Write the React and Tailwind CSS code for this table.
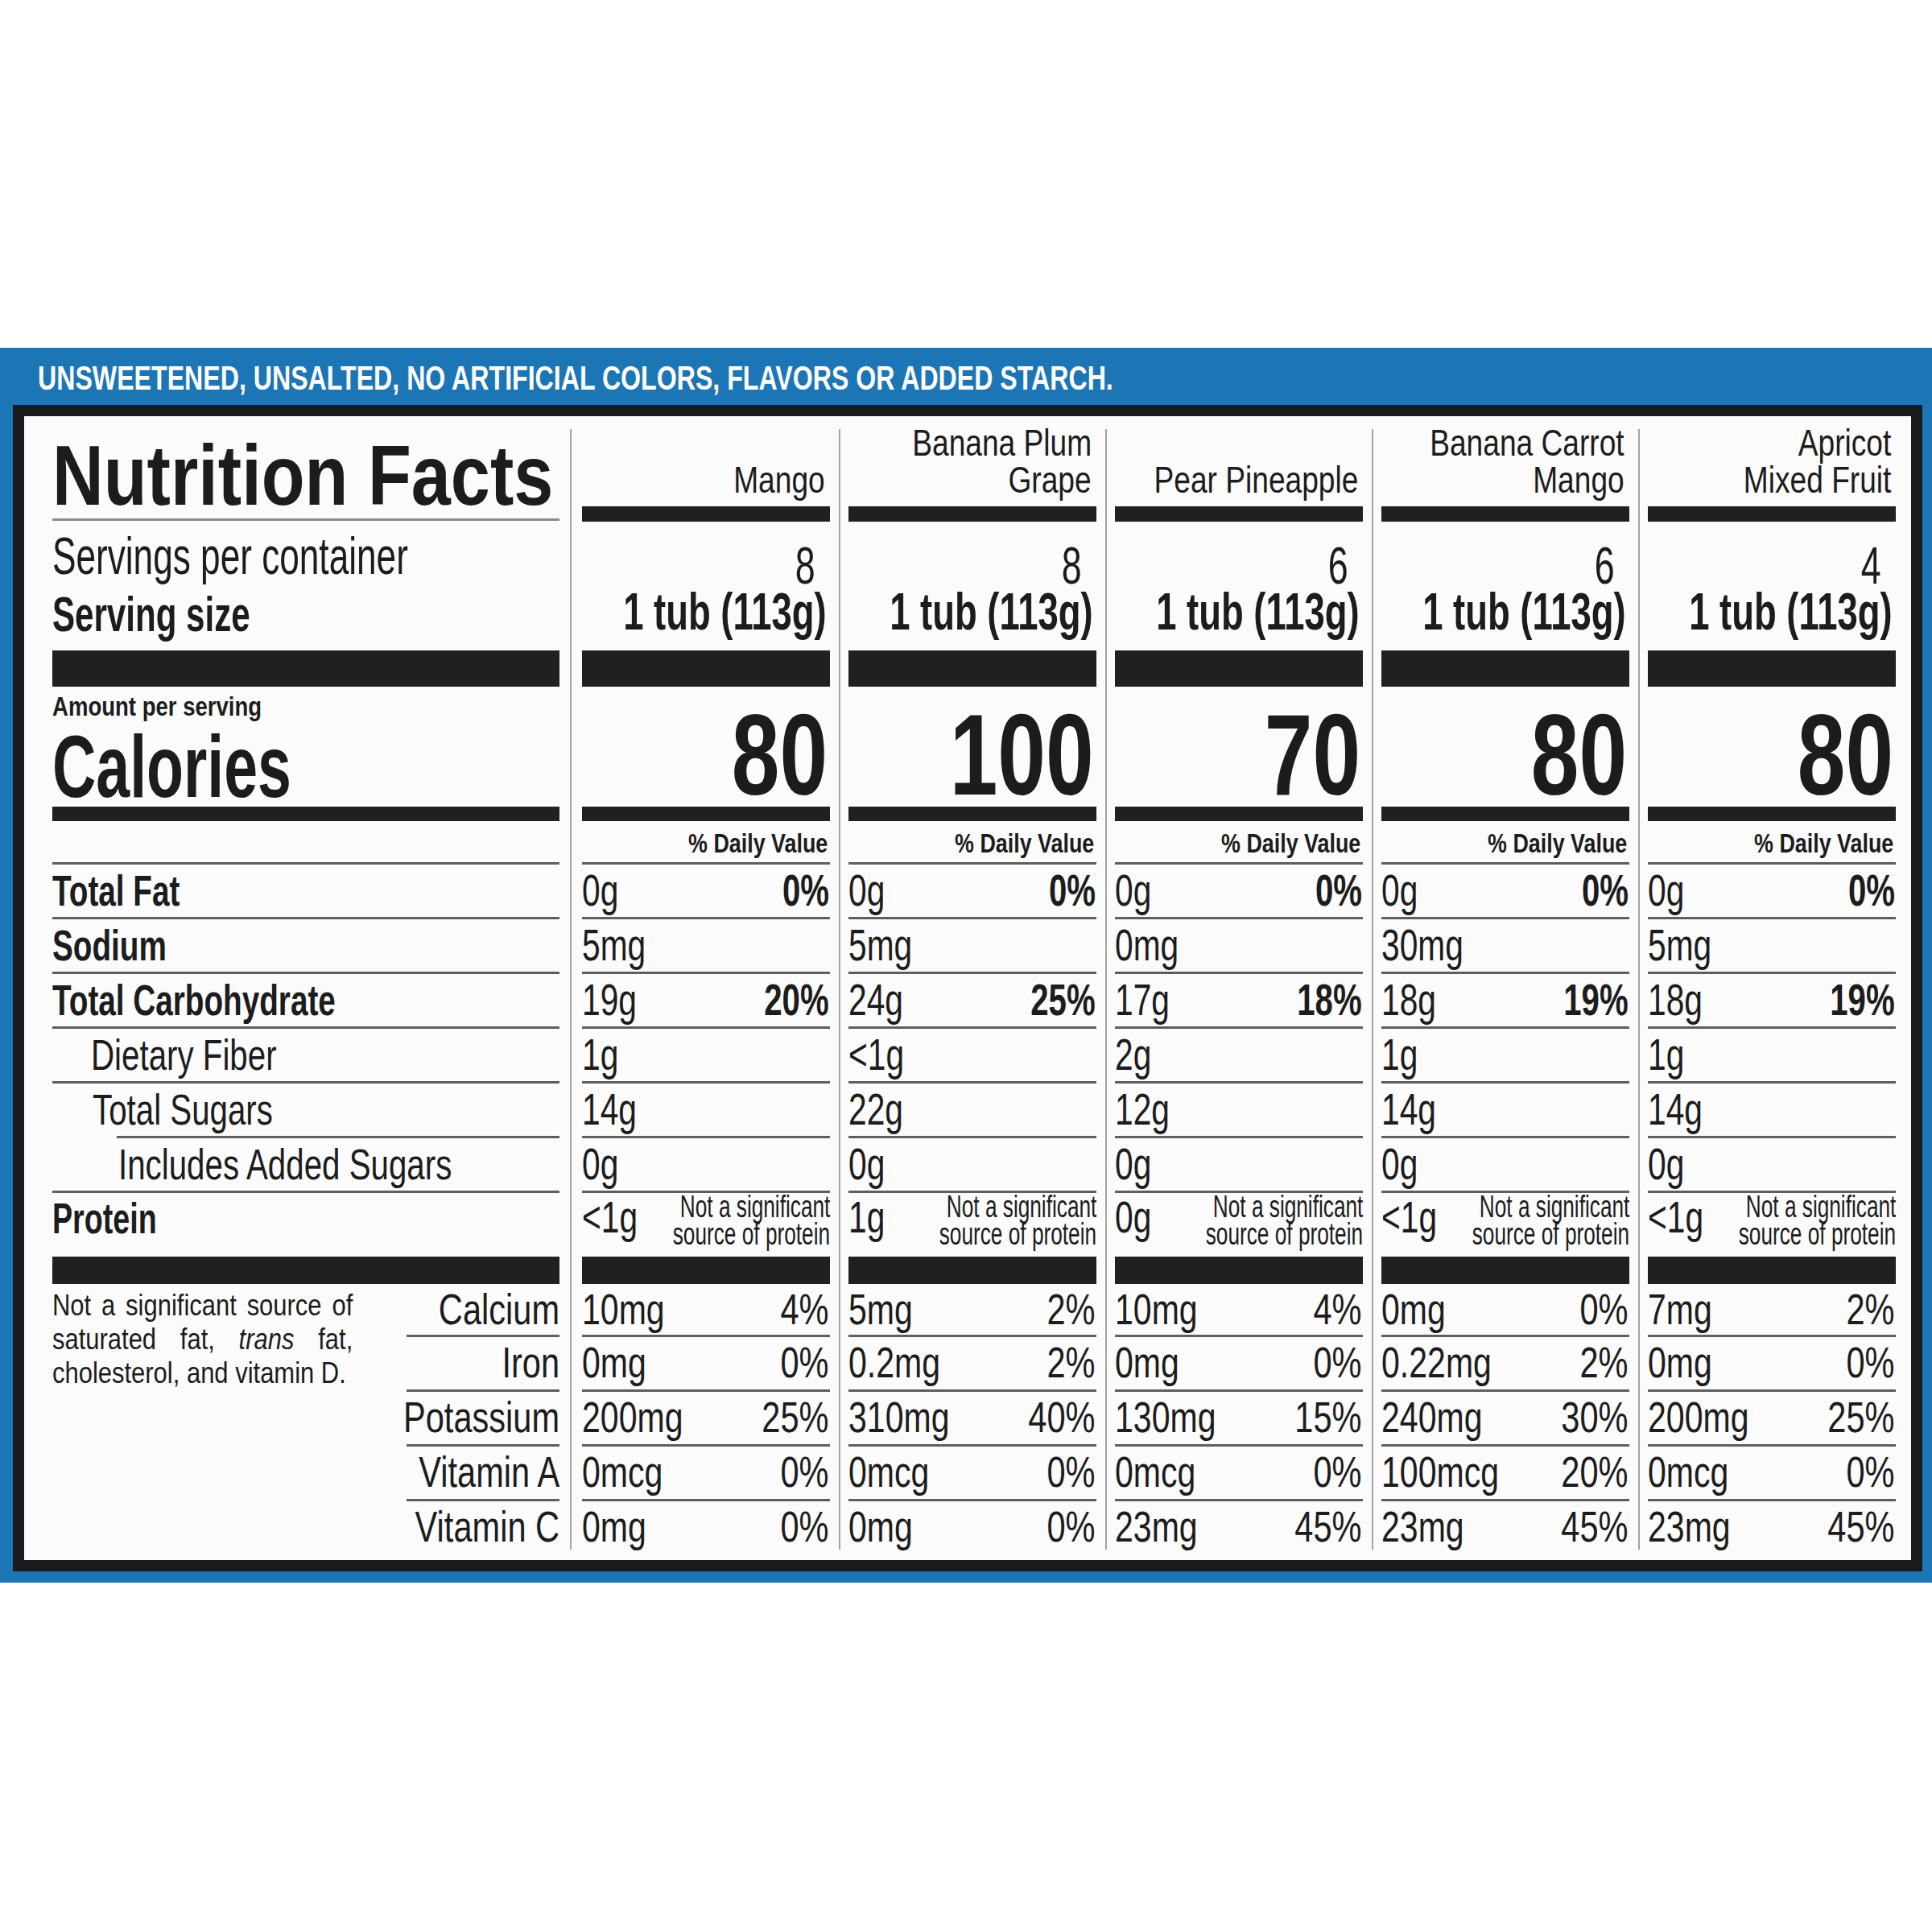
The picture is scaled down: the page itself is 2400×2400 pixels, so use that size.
import React from 'react';

// one entry per product column
const products = [
	{
		name: ['Mango'], servings: '8', cal: '80',
		fat: ['0g', '0%'], sodium: '5mg', carb: ['19g', '20%'], fiber: '1g', sugars: '14g', added: '0g', protein: '<1g',
		vit: [['10mg', '4%'], ['0mg', '0%'], ['200mg', '25%'], ['0mcg', '0%'], ['0mg', '0%']],
	},
	{
		name: ['Banana Plum', 'Grape'], servings: '8', cal: '100',
		fat: ['0g', '0%'], sodium: '5mg', carb: ['24g', '25%'], fiber: '<1g', sugars: '22g', added: '0g', protein: '1g',
		vit: [['5mg', '2%'], ['0.2mg', '2%'], ['310mg', '40%'], ['0mcg', '0%'], ['0mg', '0%']],
	},
	{
		name: ['Pear Pineapple'], servings: '6', cal: '70',
		fat: ['0g', '0%'], sodium: '0mg', carb: ['17g', '18%'], fiber: '2g', sugars: '12g', added: '0g', protein: '0g',
		vit: [['10mg', '4%'], ['0mg', '0%'], ['130mg', '15%'], ['0mcg', '0%'], ['23mg', '45%']],
	},
	{
		name: ['Banana Carrot', 'Mango'], servings: '6', cal: '80',
		fat: ['0g', '0%'], sodium: '30mg', carb: ['18g', '19%'], fiber: '1g', sugars: '14g', added: '0g', protein: '<1g',
		vit: [['0mg', '0%'], ['0.22mg', '2%'], ['240mg', '30%'], ['100mcg', '20%'], ['23mg', '45%']],
	},
	{
		name: ['Apricot', 'Mixed Fruit'], servings: '4', cal: '80',
		fat: ['0g', '0%'], sodium: '5mg', carb: ['18g', '19%'], fiber: '1g', sugars: '14g', added: '0g', protein: '<1g',
		vit: [['7mg', '2%'], ['0mg', '0%'], ['200mg', '25%'], ['0mcg', '0%'], ['23mg', '45%']],
	},
];

const vitaminRows = [
	'h-[66px] border-b-[3px]',
	'h-[68px] border-b-[3px]',
	'h-[68px] border-b-[3px]',
	'h-[68px] border-b-[3px]',
	'h-[58px]',
];
const vitaminNames = ['Calcium', 'Iron', 'Potassium', 'Vitamin A', 'Vitamin C'];

const left = 'inline-block origin-left whitespace-nowrap';
const right = 'inline-block origin-right whitespace-nowrap';

function Divider() {
	return (
		<div className="flex w-[23px] shrink-0 justify-center pt-[16px] pb-[13px]">
			<div className="w-[2px] bg-[#a3a3a3]" />
		</div>
	);
}

function ValueRow({ v, pct }) {
	return (
		<div className="flex h-[68px] items-start justify-between border-b-[3px] border-[#5e5e5e] pt-[5px] text-[55px] leading-none">
			<span className={`${left} scale-x-[0.74]`}>{v}</span>
			{pct && <span className={`${right} scale-x-[0.73] pr-[2px] font-bold`}>{pct}</span>}
		</div>
	);
}

function Column({ p }) {
	return (
		<div className="flex w-[308px] shrink-0 flex-col">
			{/* product name */}
			<div className="flex h-[112px] flex-col items-end justify-end pr-[6px] pb-[10px] text-[47px] leading-[46px]">
				{p.name.map((line) => (
					<span key={line} className={`${right} scale-x-[0.79]`}>{line}</span>
				))}
			</div>
			<div className="h-[19px] bg-[#202020]" />
			<div className="flex h-[160px] flex-col items-end pt-[27px] pr-[4px] text-[64px] leading-[57px]">
				<span className={`${right} scale-x-[0.7] pr-[20px]`}>{p.servings}</span>
				<span className={`${right} scale-x-[0.71] font-bold`}>1 tub (113g)</span>
			</div>
			<div className="h-[45px] bg-[#202020]" />
			<div className="flex h-[149px] justify-end pt-[13px] pr-[3px] text-[143px] font-bold leading-none">
				<span className={`${right} scale-x-[0.75]`}>{p.cal}</span>
			</div>
			<div className="h-[18px] bg-[#202020]" />
			<div className="flex h-[54px] justify-end border-b-[3px] border-[#5e5e5e] pt-[10px] pr-[3px] text-[34px] font-bold leading-none">
				<span className={`${right} scale-x-[0.79]`}>% Daily Value</span>
			</div>

			<ValueRow v={p.fat[0]} pct={p.fat[1]} />
			<ValueRow v={p.sodium} />
			<ValueRow v={p.carb[0]} pct={p.carb[1]} />
			<ValueRow v={p.fiber} />
			<ValueRow v={p.sugars} />
			<ValueRow v={p.added} />

			{/* protein */}
			<div className="flex h-[79px] items-start justify-between">
				<span className={`${left} scale-x-[0.74] pt-[3px] text-[55px] leading-none`}>{p.protein}</span>
				<div className="flex w-[190px] shrink-0 flex-col items-end text-[38px] leading-[34px]">
					<span className={`${right} scale-x-[0.69]`}>Not a significant</span>
					<span className={`${right} scale-x-[0.69]`}>source of protein</span>
				</div>
			</div>
			<div className="h-[34px] bg-[#202020]" />

			{p.vit.map(([v, pct], i) => (
				<div key={i} className={`flex items-start justify-between border-[#5e5e5e] pt-[4px] text-[54px] leading-none ${vitaminRows[i]}`}>
					<span className={`${left} scale-x-[0.76]`}>{v}</span>
					<span className={`${right} scale-x-[0.77] pr-[2px]`}>{pct}</span>
				</div>
			))}
		</div>
	);
}

function LabelRow({ children, bold, pad, line }) {
	return (
		<div className="flex h-[68px] flex-col">
			<div className={`h-[65px] pt-[6px] text-[53px] leading-none ${pad} ${bold ? 'font-bold' : ''}`}>
				<span className={`${left} ${bold ? 'scale-x-[0.73]' : 'scale-x-[0.76]'}`}>{children}</span>
			</div>
			<div className={`h-[3px] bg-[#5e5e5e] ${line}`} />
		</div>
	);
}

function LeftColumn() {
	return (
		<div className="flex w-[630px] shrink-0 flex-col">
			<div className="flex h-[127px] items-end pb-[1px] text-[105px] font-bold leading-none">
				<span className={`${left} scale-x-[0.84]`}>Nutrition Facts</span>
			</div>
			<div className="h-[3px] bg-[#8c8c8c]" />
			<div className="h-[161px] pt-[12px]">
				<div className="text-[64px] leading-none">
					<span className={`${left} scale-x-[0.69]`}>Servings per container</span>
				</div>
				<div className="mt-[10px] text-[61px] font-bold leading-none">
					<span className={`${left} scale-x-[0.69]`}>Serving size</span>
				</div>
			</div>
			<div className="h-[45px] bg-[#202020]" />
			<div className="h-[149px] pt-[7px]">
				<div className="text-[34px] font-bold leading-none">
					<span className={`${left} scale-x-[0.81]`}>Amount per serving</span>
				</div>
				<div className="mt-[4px] text-[109px] font-bold leading-none">
					<span className={`${left} scale-x-[0.69]`}>Calories</span>
				</div>
			</div>
			<div className="h-[18px] bg-[#202020]" />
			<div className="h-[54px] border-b-[3px] border-[#5e5e5e]" />

			<LabelRow bold>Total Fat</LabelRow>
			<LabelRow bold>Sodium</LabelRow>
			<LabelRow bold>Total Carbohydrate</LabelRow>
			<LabelRow pad="pl-[48px]">Dietary Fiber</LabelRow>
			<LabelRow pad="pl-[50px]" line="ml-[80px]">Total Sugars</LabelRow>
			<LabelRow pad="pl-[82px]">Includes Added Sugars</LabelRow>

			<div className="h-[79px] pt-[5px] text-[53px] font-bold leading-none">
				<span className={`${left} scale-x-[0.71]`}>Protein</span>
			</div>
			<div className="h-[34px] bg-[#202020]" />

			<div className="flex">
				{/* footnote, one line per row so the justified lines break as on the label */}
				<div className="w-[373px] shrink-0 pt-[6px] text-[36px] leading-[42px]">
					<div className="w-[434px] origin-left scale-x-[0.86] text-justify [text-align-last:justify]">Not a significant source of</div>
					<div className="w-[434px] origin-left scale-x-[0.86] text-justify [text-align-last:justify]">
						saturated fat, <i>trans</i> fat,
					</div>
					<div className="w-[434px] origin-left scale-x-[0.86] whitespace-nowrap">cholesterol, and vitamin D.</div>
				</div>
				<div className="flex-1" />
				<div className="w-[190px] shrink-0">
					{vitaminNames.map((n, i) => (
						<div key={n} className={`flex justify-end border-[#5e5e5e] pt-[4px] text-[54px] leading-none ${vitaminRows[i]}`}>
							<span className={`${right} scale-x-[0.77]`}>{n}</span>
						</div>
					))}
				</div>
			</div>
		</div>
	);
}

export default function App() {
	return (
		<div className="h-[2400px] w-[2400px] bg-white pt-[432px] font-['Liberation_Sans',Arial,sans-serif] text-[#1c1c1c]">
			<div className="h-[1534px] bg-[#1c75b5]">
				{/* banner */}
				<div className="h-[71px] pt-[17px] pl-[47px] text-[42px] font-bold leading-none text-white">
					<span className={`${left} scale-x-[0.765]`}>UNSWEETENED, UNSALTED, NO ARTIFICIAL COLORS, FLAVORS OR ADDED STARCH.</span>
				</div>

				{/* label frame */}
				<div className="ml-[16px] h-[1449px] w-[2372px] bg-[#1b1b1d] p-[14px]">
					<div className="flex h-full bg-[#fbfbfb] pl-[35px] pr-[17px]">
						<LeftColumn />
						<div className="flex w-[28px] shrink-0 justify-center pt-[16px] pb-[13px]">
							<div className="w-[2px] bg-[#a3a3a3]" />
						</div>
						<Column p={products[0]} />
						<Divider />
						<Column p={products[1]} />
						<Divider />
						<Column p={products[2]} />
						<Divider />
						<Column p={products[3]} />
						<Divider />
						<Column p={products[4]} />
					</div>
				</div>
			</div>
		</div>
	);
}
